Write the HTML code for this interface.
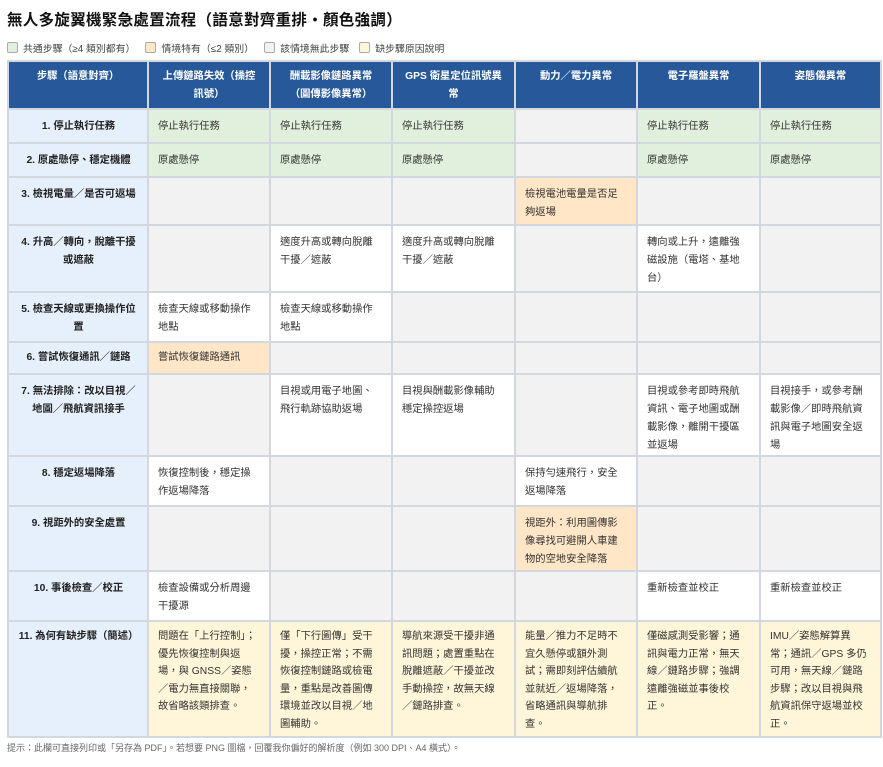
<!DOCTYPE html>
<html><head><meta charset="utf-8"><style>
body{margin:0;background:#fff;font-family:"Liberation Sans","Noto Sans CJK TC",sans-serif;color:#333;width:883px;height:767px;overflow:hidden;position:relative}
h1{position:absolute;left:7px;top:8px;margin:0;font-size:15.5px;font-weight:bold;color:#111;letter-spacing:0.3px}
.leg{position:absolute;top:41px;left:7px;font-size:9.9px;color:#444;white-space:nowrap}
.leg span{display:inline-block;margin-right:10px}
.leg i{display:inline-block;width:9px;height:9px;border:1px solid #aaa;border-radius:2px;vertical-align:-1px;margin-right:5px}
table{position:absolute;left:7px;top:60px;border-collapse:collapse;table-layout:fixed;width:873px}
td,th{border:2px solid #d3d8e0;font-size:10.3px;line-height:18px;vertical-align:top;padding:8px 8px 0 9px;text-align:left}
th{background:#27599a;color:#fff;font-weight:bold;text-align:center;border-color:#d3d8e0;padding:6px 6px 0}
td.s{background:#e6f0fc;color:#222;font-weight:bold;text-align:center}
.g{background:#e1f0dc}.o{background:#ffe6c6}.n{background:#f2f2f2}.w{background:#fff}.y{background:#fff6d9}
tr.last td{padding-top:6px;line-height:17.5px}
.foot{position:absolute;left:7px;top:741px;font-size:9px;color:#666}
</style></head><body>
<h1>無人多旋翼機緊急處置流程（語意對齊重排・顏色強調）</h1>
<div class="leg"><span><i style="background:#e1f0dc"></i>共通步驟（≥4 類別都有）</span><span><i style="background:#ffe6c6"></i>情境特有（≤2 類別）</span><span><i style="background:#f2f2f2"></i>該情境無此步驟</span><span><i style="background:#fff6d9"></i>缺步驟原因說明</span></div>
<table>
<colgroup><col style="width:140px"><col style="width:122px"><col style="width:122px"><col style="width:123px"><col style="width:122px"><col style="width:123px"><col style="width:121px"></colgroup>
<tr style="height:48px"><th>步驟（語意對齊）</th><th>上傳鏈路失效（操控<br>訊號）</th><th>酬載影像鏈路異常<br>（圖傳影像異常）</th><th>GPS 衛星定位訊號異<br>常</th><th>動力／電力異常</th><th>電子羅盤異常</th><th>姿態儀異常</th></tr>
<tr style="height:34px"><td class="s">1. 停止執行任務</td><td class="g">停止執行任務</td><td class="g">停止執行任務</td><td class="g">停止執行任務</td><td class="n"></td><td class="g">停止執行任務</td><td class="g">停止執行任務</td></tr>
<tr style="height:34px"><td class="s">2. 原處懸停、穩定機體</td><td class="g">原處懸停</td><td class="g">原處懸停</td><td class="g">原處懸停</td><td class="n"></td><td class="g">原處懸停</td><td class="g">原處懸停</td></tr>
<tr style="height:48px"><td class="s">3. 檢視電量／是否可返場</td><td class="n"></td><td class="n"></td><td class="n"></td><td class="o">檢視電池電量是否足<br>夠返場</td><td class="n"></td><td class="n"></td></tr>
<tr style="height:67px"><td class="s">4. 升高／轉向，脫離干擾<br>或遮蔽</td><td class="n"></td><td class="w">適度升高或轉向脫離<br>干擾／遮蔽</td><td class="w">適度升高或轉向脫離<br>干擾／遮蔽</td><td class="n"></td><td class="w">轉向或上升，遠離強<br>磁設施（電塔、基地<br>台）</td><td class="n"></td></tr>
<tr style="height:50px"><td class="s">5. 檢查天線或更換操作位<br>置</td><td class="w">檢查天線或移動操作<br>地點</td><td class="w">檢查天線或移動操作<br>地點</td><td class="n"></td><td class="n"></td><td class="n"></td><td class="n"></td></tr>
<tr style="height:32px"><td class="s" style="padding-top:6px">6. 嘗試恢復通訊／鏈路</td><td class="o" style="padding-top:6px">嘗試恢復鏈路通訊</td><td class="n"></td><td class="n"></td><td class="n"></td><td class="n"></td><td class="n"></td></tr>
<tr style="height:82px"><td class="s">7. 無法排除：改以目視／<br>地圖／飛航資訊接手</td><td class="n"></td><td class="w">目視或用電子地圖、<br>飛行軌跡協助返場</td><td class="w">目視與酬載影像輔助<br>穩定操控返場</td><td class="n"></td><td class="w">目視或參考即時飛航<br>資訊、電子地圖或酬<br>載影像，離開干擾區<br>並返場</td><td class="w">目視接手，或參考酬<br>載影像／即時飛航資<br>訊與電子地圖安全返<br>場</td></tr>
<tr style="height:50px"><td class="s">8. 穩定返場降落</td><td class="w">恢復控制後，穩定操<br>作返場降落</td><td class="n"></td><td class="n"></td><td class="w">保持勻速飛行，安全<br>返場降落</td><td class="n"></td><td class="n"></td></tr>
<tr style="height:65px"><td class="s">9. 視距外的安全處置</td><td class="n"></td><td class="n"></td><td class="n"></td><td class="o">視距外：利用圖傳影<br>像尋找可避開人車建<br>物的空地安全降落</td><td class="n"></td><td class="n"></td></tr>
<tr style="height:50px"><td class="s">10. 事後檢查／校正</td><td class="w">檢查設備或分析周邊<br>干擾源</td><td class="n"></td><td class="n"></td><td class="n"></td><td class="w">重新檢查並校正</td><td class="w">重新檢查並校正</td></tr>
<tr class="last" style="height:116px"><td class="s">11. 為何有缺步驟（簡述）</td><td class="y">問題在「上行控制」；<br>優先恢復控制與返<br>場，與 GNSS／姿態<br>／電力無直接關聯，<br>故省略該類排查。</td><td class="y">僅「下行圖傳」受干<br>擾，操控正常；不需<br>恢復控制鏈路或檢電<br>量，重點是改善圖傳<br>環境並改以目視／地<br>圖輔助。</td><td class="y">導航來源受干擾非通<br>訊問題；處置重點在<br>脫離遮蔽／干擾並改<br>手動操控，故無天線<br>／鏈路排查。</td><td class="y">能量／推力不足時不<br>宜久懸停或額外測<br>試；需即刻評估續航<br>並就近／返場降落，<br>省略通訊與導航排<br>查。</td><td class="y">僅磁感測受影響；通<br>訊與電力正常，無天<br>線／鏈路步驟；強調<br>遠離強磁並事後校<br>正。</td><td class="y">IMU／姿態解算異<br>常；通訊／GPS 多仍<br>可用，無天線／鏈路<br>步驟；改以目視與飛<br>航資訊保守返場並校<br>正。</td></tr>
</table>
<div class="foot">提示：此欄可直接列印或「另存為 PDF」。若想要 PNG 圖檔，回覆我你偏好的解析度（例如 300 DPI、A4 橫式）。</div>
</body></html>
